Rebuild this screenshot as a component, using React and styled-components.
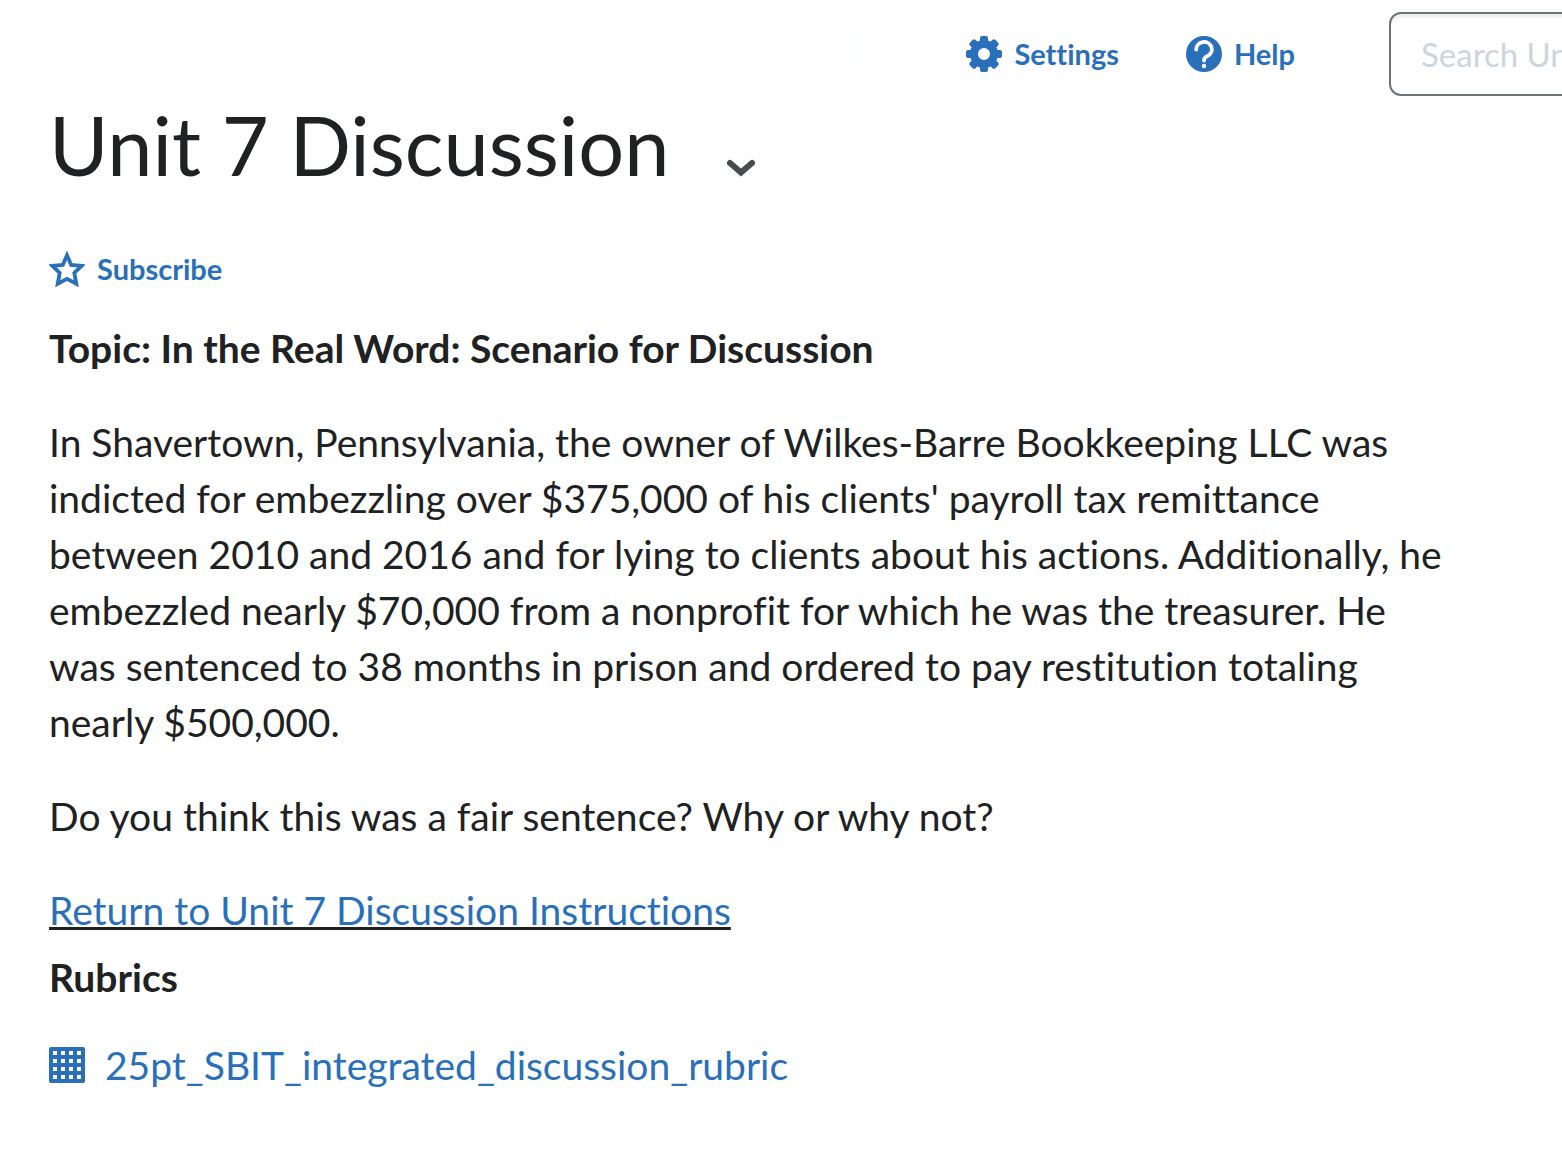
import React from 'react';
import styled, { createGlobalStyle } from 'styled-components';

const colors = {
    ink: '#202122',
    link: '#2a6fb9',
    chevron: '#494c4e',
    border: '#6e7376',
    placeholder: '#cdd5dc',
};

const GlobalStyle = createGlobalStyle`
    * {
        box-sizing: border-box;
    }

    body {
        margin: 0;
        background: #fff;
        color: ${colors.ink};
        font-family: Lato, "Liberation Sans", sans-serif;
        font-size: 39px;
        font-variant-ligatures: none;
        line-height: 56px;
    }
`;

const Page = styled.div`
    overflow: hidden;
`;

const TopBar = styled.header`
    display: flex;
    align-items: center;
    justify-content: flex-end;
    padding: 12px 0 9px;
    margin-right: -300px;
`;

const Divider = styled.span`
    width: 14px;
    height: 42px;
    margin: 0 104px 14px 0;
    background: linear-gradient(to right, #fff, #fcfdfd);
`;

const TextButton = styled.button`
    display: inline-flex;
    align-items: center;
    gap: 12px;
    padding: 0;
    border: 0;
    background: none;
    color: ${colors.link};
    font-family: inherit;
    font-size: 29px;
    font-variant-ligatures: none;
    font-weight: 700;
    line-height: 36px;
    cursor: pointer;
`;

const Actions = styled.nav`
    display: flex;
    gap: 67px;
    margin-right: 94px;
`;

const SearchInput = styled.input`
    width: 473px;
    height: 84px;
    padding: 0 30px;
    border: 2px solid ${colors.border};
    border-radius: 12px;
    box-shadow: inset 0 4px 0 #f1f2f3;
    background: #fff;
    color: ${colors.ink};
    font-family: inherit;
    font-size: 33px;

    &::placeholder {
        color: ${colors.placeholder};
        opacity: 1;
    }
`;

const Content = styled.main`
    padding: 0 110px 64px 49px;
`;

const TitleRow = styled.div`
    display: flex;
    align-items: center;
    gap: 50px;
`;

const Title = styled.h1`
    margin: 0;
    font-size: 81px;
    font-weight: 400;
    line-height: 80px;
`;

const MenuButton = styled.button`
    display: flex;
    padding: 46px 8px 0;
    border: 0;
    background: none;
    cursor: pointer;
`;

const Subscribe = styled.div`
    display: flex;
    margin: 66px 0 33px;
`;

const Heading = styled.h2`
    margin: 0;
    font-size: 39px;
    font-weight: 700;
    line-height: 56px;
`;

const Paragraph = styled.p`
    margin: 38px 0;
`;

const Underlined = styled.u`
    text-decoration: underline 3px ${colors.ink};
    text-underline-offset: 2px;
`;

const Link = styled.a`
    color: ${colors.link};
    text-decoration: none;
`;

const LinkParagraph = styled(Paragraph)`
    margin-bottom: 11px;
`;

const RubricLink = styled(Link)`
    display: inline-flex;
    align-items: center;
    gap: 20px;
    margin-top: 32px;
`;

function GearIcon() {
    return (
        <svg width="36" height="36" viewBox="-18 -18 36 36" fill={colors.link} aria-hidden="true">
            <circle r="10" fill="none" stroke={colors.link} strokeWidth="8" />
            {[0, 45, 90, 135, 180, 225, 270, 315].map((angle) => (
                <rect
                    key={angle}
                    transform={`rotate(${angle})`}
                    x="-4"
                    y="-18"
                    width="8"
                    height="9"
                    rx="2"
                />
            ))}
        </svg>
    );
}

function HelpIcon() {
    return (
        <svg width="36" height="36" viewBox="0 0 36 36" fill="none" aria-hidden="true">
            <circle cx="18" cy="18" r="18" fill={colors.link} />
            <path
                d="M10.2 13.5A7.8 7.4 0 1 1 21.500 20Q18 21.200 18 24.500"
                stroke="#fff"
                strokeWidth="3.8"
                strokeLinecap="round"
            />
            <circle cx="18" cy="30" r="2.2" fill="#fff" />
        </svg>
    );
}

function StarIcon() {
    return (
        <svg width="36" height="36" viewBox="0 0 36 36" fill="none" aria-hidden="true">
            <path
                d="M18 4.2L22.200 14L32.500 14.900L25.300 21.800L27.300 32.800L18 27.900L8.700 32.800L10.700 21.800L3.500 14.900L13.800 14Z"
                stroke={colors.link}
                strokeWidth="3.8"
            />
        </svg>
    );
}

function ChevronIcon() {
    return (
        <svg width="28" height="18" viewBox="0 0 28 18" fill="none" aria-hidden="true">
            <path
                d="M3 4L14 13.500L25 4"
                stroke={colors.chevron}
                strokeWidth="6"
                strokeLinecap="round"
            />
        </svg>
    );
}

function RubricIcon() {
    const cells = [4, 12, 20, 28];
    return (
        <svg width="36" height="36" viewBox="0 0 36 36" aria-hidden="true">
            <rect width="36" height="36" rx="2" fill={colors.link} />
            {cells.map((y) => cells.map((x) => (
                <rect key={`${x}-${y}`} x={x} y={y} width="4" height="4" fill="#fff" />
            )))}
        </svg>
    );
}

export default function App() {
    return (
        <Page>
            <GlobalStyle />
            <TopBar>
                <Divider />
                <Actions>
                    <TextButton type="button"><GearIcon />Settings</TextButton>
                    <TextButton type="button"><HelpIcon />Help</TextButton>
                </Actions>
                <SearchInput type="search" aria-label="Search" placeholder="Search Un" />
            </TopBar>
            <Content>
                <TitleRow>
                    <Title>Unit 7 Discussion</Title>
                    <MenuButton type="button" aria-label="Actions"><ChevronIcon /></MenuButton>
                </TitleRow>
                <Subscribe>
                    <TextButton type="button"><StarIcon />Subscribe</TextButton>
                </Subscribe>
                <Heading>Topic: In the Real Word: Scenario for Discussion</Heading>
                <Paragraph>
                    In Shavertown, Pennsylvania, the owner of Wilkes-Barre Bookkeeping LLC was
                    indicted for embezzling over $375,000 of his clients' payroll tax remittance
                    between 2010 and 2016 and for lying to clients about his actions. Additionally, he
                    embezzled nearly $70,000 from a nonprofit for which he was the treasurer. He
                    was sentenced to 38 months in prison and ordered to pay restitution totaling
                    nearly $500,000.
                </Paragraph>
                <Paragraph>Do you think this was a fair sentence? Why or why not?</Paragraph>
                <LinkParagraph>
                    <Underlined><Link href="#instructions">Return to Unit 7 Discussion Instructions</Link></Underlined>
                </LinkParagraph>
                <Heading>Rubrics</Heading>
                <RubricLink href="#rubric"><RubricIcon />25pt_SBIT_integrated_discussion_rubric</RubricLink>
            </Content>
        </Page>
    );
}
